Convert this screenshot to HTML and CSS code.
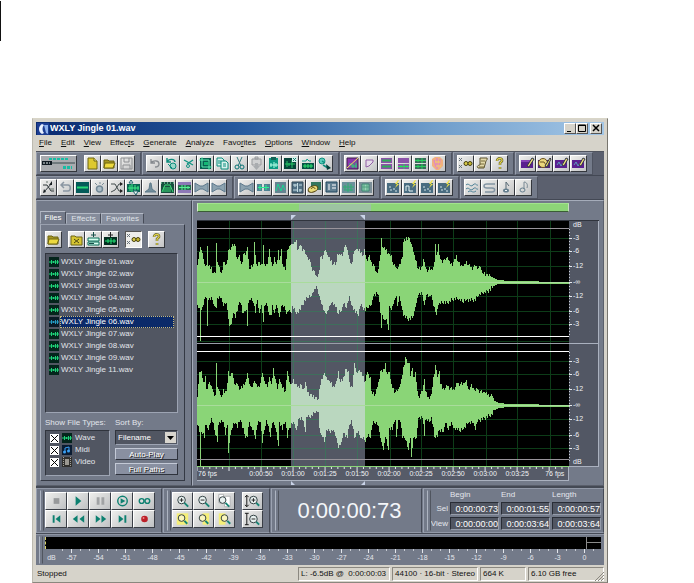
FILE: index.html
```html
<!DOCTYPE html>
<html lang="en">
<head>
<meta charset="utf-8">
<title>WXLY Jingle 01.wav</title>
<link rel="stylesheet" href="styles.css">
</head>
<body>
<svg class="defs" aria-hidden="true">
  <symbol id="new" viewBox="0 0 15 15"><path d="M3 2h6l3 3v8H3z" fill="#ddc92e" stroke="#6d6412"/><path d="M9 2v3h3" fill="#f6ee9c" stroke="#6d6412"/></symbol>
  <symbol id="open" viewBox="0 0 15 15"><path d="M2 4h4l1 1h5v7H2z" fill="#a59722" stroke="#6d6412"/><path d="M3 7h10l-2 5H2z" fill="#ecd93e" stroke="#6d6412"/></symbol>
  <symbol id="save" viewBox="0 0 15 15"><path d="M2 2h11v11H2zM5 2v4h5V2M4 13V9h7v4" fill="none" stroke="#8d8f92"/></symbol>
  <symbol id="undo" viewBox="0 0 15 15"><path d="M4 3v4h4M4 7c2-3 8-3 8 1 0 2-1 3-4 3" fill="none" stroke="#85898e" stroke-width="1.3"/></symbol>
  <symbol id="redo" viewBox="0 0 15 15"><path d="M3 2v4h4M3 6c2-4 8-3 8 0" fill="none" stroke="#0b8c7c" stroke-width="1.4"/><circle cx="9" cy="10" r="3" fill="#9ad5c8" stroke="#0b8c7c"/><path d="M4 8l4 4" stroke="#0b8c7c"/></symbol>
  <symbol id="trim" viewBox="0 0 15 15"><path d="M3 4l9 5M12 4L6 8" fill="none" stroke="#119583" stroke-width="1.4"/><circle cx="7" cy="10" r="1.500" fill="none" stroke="#119583"/></symbol>
  <symbol id="crop" viewBox="0 0 15 15"><path d="M2 2h11v11H2z" fill="#076150"/><path d="M4 1v10h10M1 4h10v10" fill="none" stroke="#5cf0b0"/><path d="M6 6h4v3H6z" fill="#14b874"/></symbol>
  <symbol id="copy" viewBox="0 0 15 15"><path d="M2 2h5l2 2v6H2z" fill="#d7f2ed" stroke="#0b8c7c"/><path d="M6 5h5l2 2v6H6z" fill="#d7f2ed" stroke="#0b8c7c"/><path d="M3 5h3M3 7h3M8 8h3M8 10h3" stroke="#0b8c7c"/></symbol>
  <symbol id="cut" viewBox="0 0 15 15"><path d="M5 1l4 9M10 1L6 10" stroke="#337d80" fill="none"/><circle cx="5" cy="11" r="2" fill="none" stroke="#0a7475"/><circle cx="10" cy="11" r="2" fill="none" stroke="#0a7475"/></symbol>
  <symbol id="paste" viewBox="0 0 15 15"><path d="M3 3h9v6H3zM6 1h3v2H6z" fill="#cfd0d1" stroke="#989a9d"/><path d="M6 7h3v3h2l-3.500 4L4 10h2z" fill="#a9acaf"/></symbol>
  <symbol id="mix" viewBox="0 0 15 15"><path d="M3 2h9v11H3z" fill="#0b9b82"/><path d="M5 1h5v3H5z" fill="#126356"/><path d="M4 9h8M5 7v4M8 6v6M10 7v4" stroke="#b3ffe8"/></symbol>
  <symbol id="wavex" viewBox="0 0 15 15"><path d="M1 2h12v11H1z" fill="#06463a"/><path d="M2 8h10M4 5v6M6 7v3M9 4v8" stroke="#29c766"/><path d="M9 1h5v5H9z" fill="#d5f2ec"/><path d="M10 2l3 3M13 2l-3 3" stroke="#16786d"/></symbol>
  <symbol id="wavein" viewBox="0 0 15 15"><path d="M2 7h12v6H2z" fill="#065345"/><path d="M3 10h10M5 8v4M8 8v4M11 8v4" stroke="#2fe36f"/><path d="M2 5h4l1-2 2 2h2" fill="none" stroke="#139c8a"/></symbol>
  <symbol id="convert" viewBox="0 0 15 15"><circle cx="5" cy="5" r="3" fill="#59cbb9" stroke="#109080"/><path d="M6 9l5 3M5 5l3 2" stroke="#0b8c7c" stroke-width="1.500"/><path d="M9 8l5 4-4 2z" fill="#063f3a"/></symbol>
  <symbol id="split" viewBox="0 0 15 15"><path d="M2 2h11v11H2z" fill="#8a35ae" stroke="#3c1c4b"/><path d="M3 12L12 3v9z" fill="#7b4ba0"/><path d="M4 8h3M6 10h6M8 8v4M11 7v5" stroke="#2bd177"/><path d="M2 12L13 2" stroke="#f4e85a"/></symbol>
  <symbol id="corner" viewBox="0 0 15 15"><path d="M4 11V4h7v2L7 10z" fill="#e5dce9" stroke="#9261a7"/></symbol>
  <symbol id="bars" viewBox="0 0 15 15"><path d="M2 2h11v5H2zM2 8h11v5H2z" fill="#8b52a9"/><path d="M3 4.500h9M3 10.500h9" stroke="#2fae58" stroke-width="2"/></symbol>
  <symbol id="bars2" viewBox="0 0 15 15"><path d="M2 2h11v5H2zM2 8h11v5H2z" fill="#8b52a9"/><path d="M2 10.500h11M5 9v3M8 8v5M11 9v3" stroke="#27e05b"/></symbol>
  <symbol id="bars3" viewBox="0 0 15 15"><path d="M2 2h11v5H2zM2 8h11v5H2z" fill="#3a6b5a"/><path d="M2 4.500h11M2 10.500h11M5 3v3M9 2v5M5 9v3M9 8v5" stroke="#27d05b"/></symbol>
  <symbol id="spectral" viewBox="0 0 15 15"><path d="M2 3l3-2h5l3 3v6l-4 4H6l-4-4z" fill="#f2b07e"/><path d="M4 4l2 7M7 2v11M10 3l-1 8" stroke="#e08abf" stroke-width="1.500"/><path d="M5 6h5M6 10h5" stroke="#f5da59"/></symbol>
  <symbol id="options" viewBox="0 0 15 15"><path d="M1 2l3 3M4 2L1 5M1 9l3 3M4 9l-3 3" stroke="#68737b"/><path d="M6 6h3v3H6z" fill="#5f5716"/><circle cx="8" cy="7.500" r="2" fill="#d8cb49" stroke="#484213"/><circle cx="12" cy="7.500" r="2" fill="#c4b52d" stroke="#484213"/></symbol>
  <symbol id="scroll" viewBox="0 0 15 15"><path d="M5 2h7c1 2-1 2-1 3l-2 7H3c-2-2 1-3 2-3z" fill="#e3d9aa" stroke="#5d5330"/><path d="M6 5h4M5 8h4M4 11h5" stroke="#776b3d"/></symbol>
  <symbol id="help" viewBox="0 0 15 15"><path d="M5 5c0-4 6-3 5 0l-2 2v2M8 11v2" fill="none" stroke="#5c5a2c" stroke-width="2.500"/><path d="M5 5c0-4 6-3 5 0l-2 2v2M8 11v2" fill="none" stroke="#e4d649" stroke-width="1.300"/></symbol>
  <symbol id="pen" viewBox="0 0 15 15"><path d="M1 4h12v8H1z" fill="#5a2090"/><path d="M1 5h9" stroke="#b56add"/><path d="M7 10l5-8 2 1-5 8z" fill="#ecd978" stroke="#303648"/></symbol>
  <symbol id="penball" viewBox="0 0 15 15"><path d="M1 4h12v8H1z" fill="#4b2676"/><circle cx="6" cy="7" r="4.500" fill="#ead77d" stroke="#6b5220"/><path d="M3 6h4l2 3" fill="none" stroke="#6b5220"/><path d="M8 10l5-8 1 1-4 8z" fill="#f2df65" stroke="#303648"/></symbol>
  <symbol id="penwave" viewBox="0 0 15 15"><path d="M1 4h12v8H1z" fill="#5a2090"/><path d="M3 9l2-3 2 4 2-3" fill="none" stroke="#5d9cbe"/><path d="M8 9l4-7 2 1-4 7z" fill="#ecd978" stroke="#303648"/></symbol>
  <symbol id="invert" viewBox="0 0 15 15"><path d="M2 5h4l4 6h3M3 12L11 3" fill="none" stroke="#30383b"/><path d="M11 1v4H8zM2 13l1-4 2 3z" fill="#161d20"/><path d="M5 2h2M9 9h4" stroke="#64736a"/></symbol>
  <symbol id="reverse" viewBox="0 0 15 15"><path d="M3 5h7c3 0 3 6 0 6H5M6 2L3 5l3 3" fill="none" stroke="#8b97a2" stroke-width="1.500"/></symbol>
  <symbol id="silence" viewBox="0 0 15 15"><path d="M1 2h13v11H1z" fill="#045b59"/><path d="M2 7.500h11" stroke="#25d876" stroke-width="2"/></symbol>
  <symbol id="ball" viewBox="0 0 15 15"><circle cx="7.500" cy="9" r="3" fill="#acbdc7" stroke="#728896" stroke-width="1.500"/><path d="M3 3l2 2M8 2v2M12 3l-2 2" stroke="#7b8e99"/></symbol>
  <symbol id="channel" viewBox="0 0 15 15"><path d="M2 4h4l4 7h3M2 12l4-2 4-6h3" fill="none" stroke="#434c4d"/><path d="M11 2l3 2-3 2zM11 9l3 2-3 2z" fill="#222"/></symbol>
  <symbol id="amplify" viewBox="0 0 15 15"><path d="M1 4h13v8H1z" fill="#0b6853"/><path d="M2 8h11M4 5v6M6 4v8M9 5v6M12 6v4" stroke="#3ff189"/><path d="M5 0l2 3H3zM10 15l-3-4h5z" fill="#effff7" stroke="#23606c"/></symbol>
  <symbol id="peak" viewBox="0 0 15 15"><path d="M2 12h11L9 9 8 3H7L6 9z" fill="#728d9b" stroke="#5d7989"/></symbol>
  <symbol id="envelope" viewBox="0 0 15 15"><path d="M1 2h13v11H1z" fill="#17503f"/><path d="M2 12L5 5h5l3 7M4 12V7M6 12V7M8 12V7M10 12V7" fill="none" stroke="#3ddc78"/><path d="M1 3h13" stroke="#9ff2c7" stroke-dasharray="1 2"/></symbol>
  <symbol id="normal" viewBox="0 0 15 15"><path d="M1 2h13v11H1z" fill="#8d78b6"/><path d="M1 5h13v5H1z" fill="#2a6b52"/><path d="M2 7.500h11M5 5v5M8 5v5M11 6v3" stroke="#57f493"/></symbol>
  <symbol id="bow" viewBox="0 0 15 15"><path d="M1 3l5 3h3l5-3v9L9 9H6l-5 3z" fill="#8da3b0" stroke="#5d798c"/></symbol>
  <symbol id="delay" viewBox="0 0 15 15"><path d="M1 4h5v7H1zM8 4h6v7H8z" fill="#4f8292"/><path d="M2 7.500h11M4 5v5M10 5v5" stroke="#2df294"/></symbol>
  <symbol id="filter" viewBox="0 0 15 15"><path d="M2 2h11v11H2z" fill="#648491"/><path d="M3 11L5 4l3 7 2-6 2 5" fill="none" stroke="#1dd392"/></symbol>
  <symbol id="grid" viewBox="0 0 15 15"><path d="M2 2h11v11H2z" fill="#506f83" stroke="#304654"/><path d="M3 5h4M9 5h3M3 10h4M9 10h3M5 4v3M10 9v3M7.500 3v9" stroke="#c4dce2"/></symbol>
  <symbol id="shell" viewBox="0 0 15 15"><path d="M4 2h10v8H4z" fill="#33775e"/><ellipse cx="6" cy="9" rx="5" ry="3" transform="rotate(-20 6 9)" fill="#e9dc79" stroke="#58450f"/><path d="M4 9c1-2 4-2 4 0" fill="none" stroke="#58450f"/></symbol>
  <symbol id="info" viewBox="0 0 15 15"><path d="M2 2h11v10H2z" fill="#607f91" stroke="#21475e"/><path d="M5 4v6M8 5h4M8 8h4" stroke="#fff"/></symbol>
  <symbol id="cross" viewBox="0 0 15 15"><path d="M1 2h13v11H1z" fill="#6b919b"/><path d="M2 7h11M7 3v9M4 5v5M10 4v7M3 10h9" stroke="#31ad73"/></symbol>
  <symbol id="target" viewBox="0 0 15 15"><path d="M1 2h13v11H1z" fill="#7b8e97"/><path d="M4 4h7v7H4z" fill="#9bd3b8" stroke="#3b8572"/><path d="M6 4v7M9 4v7M4 7h7" stroke="#51a07f"/></symbol>
  <symbol id="spark" viewBox="0 0 15 15"><path d="M1 3h12v10H1z" fill="#496c80"/><path d="M3 7h2M4 10h2M7 9h2M9 11h2" stroke="#d5e5e9"/><path d="M12 0L9 4h2l-2 4 4-4h-2l2-4z" fill="#f3e543"/></symbol>
  <symbol id="sparkn" viewBox="0 0 15 15"><path d="M1 3h12v10H1z" fill="#496c80"/><path d="M3 11V6h3v5h4" fill="none" stroke="#e5f4f4"/><path d="M12 0L9 4h2l-2 4 4-4h-2l2-4z" fill="#f3e543"/></symbol>
  <symbol id="waves" viewBox="0 0 15 15"><path d="M1 5c3-3 4 3 7 0s3 1 5 0M1 9c3-3 4 3 7 0s3 1 5 0M3 12c3-3 4 2 8-1" fill="none" stroke="#4c8197"/></symbol>
  <symbol id="loop" viewBox="0 0 15 15"><path d="M13 4H5C1 4 1 8 5 8h5c4 0 3 4 0 4H3" fill="none" stroke="#8395a3" stroke-width="1.500"/></symbol>
  <symbol id="note" viewBox="0 0 15 15"><path d="M7 2v9M7 2l3 4" fill="none" stroke="#576975"/><ellipse cx="7" cy="10.500" rx="3" ry="2" fill="#637d8d"/><path d="M6 10.500h2" stroke="#f0f5f8"/></symbol>
  <symbol id="note2" viewBox="0 0 15 15"><path d="M8 2v7M8 2c3 0 4 3 3 6" fill="none" stroke="#7a8a95"/><ellipse cx="6.500" cy="10" rx="2.500" ry="2" fill="none" stroke="#637d8d"/></symbol>
  <symbol id="closef" viewBox="0 0 15 15"><path d="M2 4h4l1 1h6v8H2z" fill="#d6c532" stroke="#6d6412"/><path d="M5 7l5 4M10 7l-5 4" stroke="#4a4612"/></symbol>
  <symbol id="insert" viewBox="0 0 15 15"><path d="M2 6h11v3H2zM2 10h11v3H2z" fill="#d8fff1" stroke="#0a6e59"/><path d="M7.500 0v5M5 3h5M3 11.500h5" stroke="#164f49"/></symbol>
  <symbol id="insertw" viewBox="0 0 15 15"><path d="M1 5h13v8H1z" fill="#032e21"/><path d="M2 9h11M5 7v4M8 6v6M11 7v4" stroke="#23e375"/><path d="M7.500 0v5M5 3h5" stroke="#222"/></symbol>
  <symbol id="wavefile" viewBox="0 0 10 10"><path d="M0 0h10v10H0z" fill="#04251c"/><path d="M0 5h10M2.500 3v4M4.500 4v2M6.500 3v4M8.500 3v4" stroke="#1fd47a"/></symbol>
  <symbol id="midifile" viewBox="0 0 10 10"><path d="M0 0h10v10H0z" fill="#091b32"/><path d="M3 7V3l4-1v4" fill="none" stroke="#3aa0f5"/><circle cx="2.500" cy="7" r="1.500" fill="#3aa0f5"/><circle cx="6.500" cy="6" r="1.500" fill="#3aa0f5"/></symbol>
  <symbol id="videofile" viewBox="0 0 10 10"><path d="M0 0h10v10H0z" fill="#302f2d"/><path d="M3 2h4v6H3z" fill="#9b9892"/><path d="M1.500 0v10M8.500 0v10" stroke="#a5a29b" stroke-dasharray="1 1"/></symbol>
  <symbol id="stop" viewBox="0 0 20 16"><path d="M7 5h6v6H7z" fill="#97999b"/></symbol>
  <symbol id="play" viewBox="0 0 20 16"><path d="M7 3l6 5-6 5z" fill="#0d8070"/></symbol>
  <symbol id="pause" viewBox="0 0 20 16"><path d="M6 4h3v8H6zM11 4h3v8h-3z" fill="#a0a2a4"/></symbol>
  <symbol id="playc" viewBox="0 0 20 16"><circle cx="10" cy="8" r="5" fill="none" stroke="#0d8070" stroke-width="1.500"/><path d="M8 5l5 3-5 3z" fill="#0d8070"/></symbol>
  <symbol id="inf" viewBox="0 0 20 16"><circle cx="7" cy="8" r="2.500" fill="none" stroke="#0d8070" stroke-width="1.500"/><circle cx="13" cy="8" r="2.500" fill="none" stroke="#0d8070" stroke-width="1.500"/></symbol>
  <symbol id="first" viewBox="0 0 20 16"><path d="M6 4h2v8H6zM14 4v8L9 8z" fill="#0d8070"/></symbol>
  <symbol id="rew" viewBox="0 0 20 16"><path d="M9 4v8L4 8zM16 4v8l-5-4z" fill="#0d8070"/></symbol>
  <symbol id="fwd" viewBox="0 0 20 16"><path d="M5 4v8l5-4zM11 4v8l5-4z" fill="#0d8070"/></symbol>
  <symbol id="last" viewBox="0 0 20 16"><path d="M12 4h2v8h-2zM6 4v8l5-4z" fill="#0d8070"/></symbol>
  <symbol id="rec" viewBox="0 0 20 16"><circle cx="10" cy="8" r="3.500" fill="#bc2029"/><circle cx="9" cy="7" r="1" fill="#f08a8a"/></symbol>
  <symbol id="zin" viewBox="0 0 20 16"><circle cx="9" cy="7" r="4" fill="#e8f1f0" stroke="#2c3b3d"/><path d="M7 7h4M9 5v4" stroke="#222"/><path d="M12 10l4 4" stroke="#168575" stroke-width="2"/></symbol>
  <symbol id="zout" viewBox="0 0 20 16"><circle cx="9" cy="7" r="4" fill="#e8f1f0" stroke="#2c3b3d"/><path d="M7 7h4" stroke="#222"/><path d="M12 10l4 4" stroke="#168575" stroke-width="2"/></symbol>
  <symbol id="zfull" viewBox="0 0 20 16"><path d="M4 1h5v9H4zM10 3h6v11h-6z" fill="#fff" stroke="#b0b2b4"/><circle cx="8" cy="7" r="3.500" fill="#e8f1f0" stroke="#2c3b3d"/><path d="M11 10l4 4" stroke="#168575" stroke-width="2"/></symbol>
  <symbol id="zsel" viewBox="0 0 20 16"><path d="M4 2h12v12H4z" fill="#f5ef78"/><circle cx="9" cy="7" r="3.500" fill="#faf6bd" stroke="#2c3b3d"/><path d="M12 10l3 3" stroke="#168575" stroke-width="2"/></symbol>
  <symbol id="zleft" viewBox="0 0 20 16"><path d="M9 2h7v12H9z" fill="#f5ef78"/><circle cx="9" cy="7" r="3.500" fill="#faf6bd" stroke="#2c3b3d"/><path d="M12 10l3 3" stroke="#168575" stroke-width="2"/></symbol>
  <symbol id="zright" viewBox="0 0 20 16"><path d="M4 2h7v12H4z" fill="#f5ef78"/><circle cx="10" cy="7" r="3.500" fill="#faf6bd" stroke="#2c3b3d"/><path d="M13 10l3 3" stroke="#168575" stroke-width="2"/></symbol>
  <symbol id="vin" viewBox="0 0 20 16"><path d="M4 2v12M2 4l2-2 2 2M2 12l2 2 2-2" fill="none" stroke="#111"/><circle cx="11" cy="7" r="4" fill="#e8f1f0" stroke="#2c3b3d"/><path d="M9 7h4M11 5v4" stroke="#222"/><path d="M14 10l3 3" stroke="#168575" stroke-width="2"/></symbol>
  <symbol id="vout" viewBox="0 0 20 16"><path d="M4 2v12M2 2h4M2 14h4" fill="none" stroke="#111"/><circle cx="11" cy="8" r="4" fill="#e8f1f0" stroke="#2c3b3d"/><path d="M9 8h4" stroke="#222"/><path d="M14 11l3 3" stroke="#168575" stroke-width="2"/></symbol>
</svg>

<div class="text-cursor"></div>
<main class="window">
  <header class="title">
    <svg class="app-icon" viewBox="0 0 12 12"><path d="M0 0h12v12H0z" fill="#1c3d92"/><path d="M5 1C1 3 1 9 5 11l2-1C5 8 5 4 7 2z" fill="#e9f1ff"/><path d="M7 2h4v9l-2-1z" fill="#8fb2ec"/></svg>
    <h1>WXLY Jingle 01.wav</h1>
    <div class="win-buttons">
      <button aria-label="Minimize"><svg viewBox="0 0 10 9"><path d="M2 7.500h4" stroke="#000"/></svg></button>
      <button aria-label="Maximize"><svg viewBox="0 0 10 9"><path d="M1.500 1v6.500h7V1z" fill="none" stroke="#000"/><path d="M1 1.500h8" stroke="#000"/></svg></button>
      <button class="close" aria-label="Close"><svg viewBox="0 0 10 9"><path d="M2 1l6 6M8 1L2 7" stroke="#000" stroke-width="1.500"/></svg></button>
    </div>
  </header>
  <nav class="menu">
    <a href="#"><u>F</u>ile</a><a href="#"><u>E</u>dit</a><a href="#"><u>V</u>iew</a><a href="#">Effec<u>t</u>s</a><a href="#"><u>G</u>enerate</a><a href="#"><u>A</u>nalyze</a><a href="#">Favo<u>r</u>ites</a><a href="#"><u>O</u>ptions</a><a href="#"><u>W</u>indow</a><a href="#"><u>H</u>elp</a>
  </nav>
  <div class="body">
    <div class="toolbar">
      <div class="group">
        <button class="tb mode" aria-label="Switch view"><svg viewBox="0 0 35 15"><path d="M8 3h20" stroke="#17bda5" stroke-width="2" stroke-dasharray="3 1"/><path d="M1 5h10v4H1z" fill="#101a22"/><path d="M11 7h23" stroke="#39484d"/><path d="M2 7h7" stroke="#e7eff0" stroke-dasharray="2 1"/><path d="M22 11.500h9" stroke="#17bda5" stroke-width="3" stroke-dasharray="3 1"/></svg></button>
        <button class="tb" aria-label="New"><svg><use href="#new"/></svg></button><button class="tb" aria-label="Open"><svg><use href="#open"/></svg></button><button class="tb" aria-label="Save"><svg><use href="#save"/></svg></button>
      </div>
      <div class="group">
        <button class="tb" aria-label="Undo"><svg><use href="#undo"/></svg></button><button class="tb" aria-label="Repeat"><svg><use href="#redo"/></svg></button><button class="tb" aria-label="Trim"><svg><use href="#trim"/></svg></button><button class="tb" aria-label="Crop"><svg><use href="#crop"/></svg></button><button class="tb" aria-label="Copy"><svg><use href="#copy"/></svg></button><button class="tb" aria-label="Cut"><svg><use href="#cut"/></svg></button><button class="tb" aria-label="Paste"><svg><use href="#paste"/></svg></button><button class="tb" aria-label="Mix paste"><svg><use href="#mix"/></svg></button><button class="tb" aria-label="Delete selection"><svg><use href="#wavex"/></svg></button><button class="tb" aria-label="Insert wave"><svg><use href="#wavein"/></svg></button><button class="tb" aria-label="Convert"><svg><use href="#convert"/></svg></button>
      </div>
      <div class="group">
        <button class="tb" aria-label="Toggle spectral"><svg><use href="#split"/></svg></button><button class="tb" aria-label="Snap"><svg><use href="#corner"/></svg></button><button class="tb" aria-label="Both channels"><svg><use href="#bars"/></svg></button><button class="tb" aria-label="Left channel"><svg><use href="#bars2"/></svg></button><button class="tb" aria-label="Right channel"><svg><use href="#bars3"/></svg></button><button class="tb" aria-label="Spectrum"><svg><use href="#spectral"/></svg></button>
      </div>
      <div class="group">
        <button class="tb" aria-label="Settings"><svg><use href="#options"/></svg></button><button class="tb" aria-label="Scripts"><svg><use href="#scroll"/></svg></button><button class="tb" aria-label="Help"><svg><use href="#help"/></svg></button>
      </div>
      <div class="group">
        <button class="tb" aria-label="Edit cue"><svg><use href="#pen"/></svg></button><button class="tb" aria-label="Edit play list"><svg><use href="#penball"/></svg></button><button class="tb" aria-label="Edit info"><svg><use href="#penwave"/></svg></button><button class="tb" aria-label="Edit format"><svg><use href="#penwave"/></svg></button>
      </div>
    </div>
    <div class="toolbar">
      <div class="group">
        <button class="tb" aria-label="Invert"><svg><use href="#invert"/></svg></button><button class="tb" aria-label="Reverse"><svg><use href="#reverse"/></svg></button><button class="tb" aria-label="Silence"><svg><use href="#silence"/></svg></button><button class="tb" aria-label="Pan"><svg><use href="#ball"/></svg></button><button class="tb" aria-label="Channel mixer"><svg><use href="#channel"/></svg></button><button class="tb" aria-label="Amplify"><svg><use href="#amplify"/></svg></button><button class="tb" aria-label="Limiter"><svg><use href="#peak"/></svg></button><button class="tb" aria-label="Envelope"><svg><use href="#envelope"/></svg></button><button class="tb" aria-label="Normalize"><svg><use href="#normal"/></svg></button><button class="tb" aria-label="Compress"><svg><use href="#bow"/></svg></button><button class="tb" aria-label="Expand"><svg><use href="#bow"/></svg></button>
      </div>
      <div class="group">
        <button class="tb" aria-label="Stretch"><svg><use href="#bow"/></svg></button><button class="tb" aria-label="Delay"><svg><use href="#delay"/></svg></button><button class="tb" aria-label="Filter"><svg><use href="#filter"/></svg></button><button class="tb" aria-label="Equalizer"><svg><use href="#grid"/></svg></button><button class="tb" aria-label="Reverb"><svg><use href="#shell"/></svg></button><button class="tb" aria-label="Multitap"><svg><use href="#info"/></svg></button><button class="tb" aria-label="Flanger"><svg><use href="#cross"/></svg></button><button class="tb" aria-label="Chamber"><svg><use href="#target"/></svg></button>
      </div>
      <div class="group">
        <button class="tb" aria-label="Click elimination"><svg><use href="#spark"/></svg></button><button class="tb" aria-label="Noise reduction"><svg><use href="#sparkn"/></svg></button><button class="tb" aria-label="Hiss reduction"><svg><use href="#spark"/></svg></button><button class="tb" aria-label="Clip restoration"><svg><use href="#spark"/></svg></button>
      </div>
      <div class="group">
        <button class="tb" aria-label="Distortion"><svg><use href="#waves"/></svg></button><button class="tb" aria-label="Loop"><svg><use href="#loop"/></svg></button><button class="tb" aria-label="Pitch"><svg><use href="#note"/></svg></button><button class="tb" aria-label="Tempo"><svg><use href="#note2"/></svg></button>
      </div>
    </div>

    <div class="work">
      <aside class="organizer">
        <div class="tabs" role="tablist"><button role="tab" aria-selected="true">Files</button><button role="tab">Effects</button><button role="tab">Favorites</button></div>
        <div class="panel">
          <div class="file-tools">
            <button class="tb" aria-label="Open file"><svg><use href="#open"/></svg></button>
            <div><button class="tb" aria-label="Close file"><svg><use href="#closef"/></svg></button><button class="tb" aria-label="Insert into multitrack"><svg><use href="#insert"/></svg></button><button class="tb" aria-label="Edit file"><svg><use href="#insertw"/></svg></button></div>
            <button class="tb pressed" aria-label="Show options"><svg><use href="#options"/></svg></button>
            <button class="tb" aria-label="Organizer help"><svg><use href="#help"/></svg></button>
          </div>
          <ul class="files">
            <li><svg><use href="#wavefile"/></svg><span>WXLY Jingle 01.wav</span></li>
            <li><svg><use href="#wavefile"/></svg><span>WXLY Jingle 02.wav</span></li>
            <li><svg><use href="#wavefile"/></svg><span>WXLY Jingle 03.wav</span></li>
            <li><svg><use href="#wavefile"/></svg><span>WXLY Jingle 04.wav</span></li>
            <li><svg><use href="#wavefile"/></svg><span>WXLY Jingle 05.wav</span></li>
            <li class="selected"><svg><use href="#wavefile"/></svg><span>WXLY Jingle 06.wav</span></li>
            <li><svg><use href="#wavefile"/></svg><span>WXLY Jingle 07.wav</span></li>
            <li><svg><use href="#wavefile"/></svg><span>WXLY Jingle 08.wav</span></li>
            <li><svg><use href="#wavefile"/></svg><span>WXLY Jingle 09.wav</span></li>
            <li><svg><use href="#wavefile"/></svg><span>WXLY Jingle 11.wav</span></li>
          </ul>
          <div class="filters">
            <div>
              <p class="caption">Show File Types:</p>
              <div class="types">
                <label><input type="checkbox" checked><svg><use href="#wavefile"/></svg>Wave</label>
                <label><input type="checkbox" checked><svg><use href="#midifile"/></svg>Midi</label>
                <label><input type="checkbox" checked><svg><use href="#videofile"/></svg>Video</label>
              </div>
            </div>
            <div class="sort">
              <label class="caption" for="sort">Sort By:</label>
              <div class="combo"><select id="sort"><option>Filename</option></select><svg viewBox="0 0 11 11"><path d="M0 0h11v11H0z" fill="#d8d5ce"/><path d="M2 4h7L5.500 8z" fill="#000"/></svg></div>
              <button class="flat">Auto-Play</button>
              <button class="flat">Full Paths</button>
            </div>
          </div>
        </div>
      </aside>
      <section class="editor">
        <div class="overview"><div class="overview-sel"></div></div>
        <svg class="handles top" viewBox="0 0 372 5" preserveAspectRatio="none"><path d="M94 0h5l-5 5zM168 0h-5l5 5z"/></svg>
        <div class="wave-row">
          <svg id="wave" viewBox="0 0 372 246" preserveAspectRatio="none"></svg>
          <svg id="db" class="db"></svg>
        </div>
        <svg id="time" class="time"></svg>
        <svg class="handles" viewBox="0 0 372 5" preserveAspectRatio="none"><path d="M94 0v4h4zM168 0v4h-4z"/></svg>
      </section>
    </div>

    <div class="lower">
      <div class="box transport">
        <button aria-label="Stop"><svg><use href="#stop"/></svg></button><button aria-label="Play"><svg><use href="#play"/></svg></button><button aria-label="Pause"><svg><use href="#pause"/></svg></button><button aria-label="Play to end"><svg><use href="#playc"/></svg></button><button aria-label="Play looped"><svg><use href="#inf"/></svg></button>
        <button aria-label="Go to start"><svg><use href="#first"/></svg></button><button aria-label="Rewind"><svg><use href="#rew"/></svg></button><button aria-label="Fast forward"><svg><use href="#fwd"/></svg></button><button aria-label="Go to end"><svg><use href="#last"/></svg></button><button aria-label="Record"><svg><use href="#rec"/></svg></button>
      </div>
      <div class="box zooms">
        <button aria-label="Zoom in"><svg><use href="#zin"/></svg></button><button aria-label="Zoom out"><svg><use href="#zout"/></svg></button><button aria-label="Zoom full"><svg><use href="#zfull"/></svg></button><i></i><button aria-label="Vertical zoom in"><svg><use href="#vin"/></svg></button>
        <button aria-label="Zoom to selection"><svg><use href="#zsel"/></svg></button><button aria-label="Zoom left edge"><svg><use href="#zleft"/></svg></button><button aria-label="Zoom right edge"><svg><use href="#zright"/></svg></button><i></i><button aria-label="Vertical zoom out"><svg><use href="#vout"/></svg></button>
      </div>
      <div class="box clock"><output>0:00:00:73</output></div>
      <div class="box range">
        <span></span><span>Begin</span><span>End</span><span>Length</span>
        <span class="row-name">Sel</span><input aria-label="Selection begin" value="0:00:00:73"><input aria-label="Selection end" value="0:00:01:55"><input aria-label="Selection length" value="0:00:00:57">
        <span class="row-name">View</span><input aria-label="View begin" value="0:00:00:00"><input aria-label="View end" value="0:00:03:64"><input aria-label="View length" value="0:00:03:64">
      </div>
    </div>

    <div class="meter">
      <div class="level"><div class="clip"></div></div>
      <div class="scale">
        <span class="unit">dB</span><span>-57</span><span>-54</span><span>-51</span><span>-48</span><span>-45</span><span>-42</span><span>-39</span><span>-36</span><span>-33</span><span>-30</span><span>-27</span><span>-24</span><span>-21</span><span>-18</span><span>-15</span><span>-12</span><span>-9</span><span>-6</span><span>-3</span><span>0</span>
      </div>
    </div>
  </div>
  <footer class="status">
    <span class="state">Stopped</span><span class="cell pos">L: -6.5dB @&nbsp; 0:00:00:03</span><span class="cell fmt">44100 · 16-bit · Stereo</span><span class="cell size">664 K</span><span class="cell free">6.10 GB free</span>
    <svg class="grip" viewBox="0 0 9 9"><path d="M0 9L9 0M3 9l6-6M6 9l3-3" stroke="#8b8880"/></svg>
  </footer>
</main>
<script src="wave.js"></script>
</body>
</html>
```
FILE: styles.css
```css
* { box-sizing: border-box; }
body {
  margin: 0;
  background: #fff;
  color: #111;
  font: 8px/12px "Liberation Sans", Arial, sans-serif;
}
.defs { position: absolute; width: 0; height: 0; }
button, input, select { font: inherit; color: inherit; margin: 0; padding: 0; border-radius: 0; }
h1, p, ul { margin: 0; padding: 0; }
svg { display: block; }

.text-cursor { width: 1px; height: 40px; margin: 1px 0 77px; background: #111; }
.window {
  margin: 0 86px 0 32px;
  padding: 3px 3px 0;
  background: #d6d3ca;
  border: 1px solid #bdbab0;
  border-top-color: #d9d6c8;
  border-right-color: #77756e;
  border-bottom-color: #8a877e;
}
.title {
  display: flex;
  align-items: center;
  height: 13px;
  padding: 0 2px 0 1px;
  background: linear-gradient(90deg, #0a2a70, #24589d 35%, #6f9dcb 70%, #a3c6e6);
  color: #fff;
}
.app-icon { width: 12px; height: 12px; }
.title h1 { flex: 1; margin-left: 1px; font-size: 9px; line-height: 13px; }
.win-buttons { display: flex; }
.win-buttons button { width: 12px; height: 11px; background: #d6d3ca; border: 1px solid; border-color: #fff #555 #555 #fff; }
.win-buttons .close { margin-left: 2px; }
.win-buttons svg { width: 10px; height: 9px; }
.menu { display: flex; gap: 9px; height: 16px; padding-left: 3px; line-height: 15px; }
.menu a { color: #111; text-decoration: none; }

.body { background: #737a89; border-top: 1px solid #50545e; }
.toolbar { display: flex; gap: 1px; height: 24px; background: #5b606e; border-bottom: 1px solid #434854; }
.group {
  display: flex;
  align-items: center;
  height: 23px;
  padding: 0 5px 0 3px;
  background: #747b8a;
  border: 1px solid;
  border-color: #8d94a3 #4e5360 #4e5360 #99a0af;
}
.tb {
  display: grid;
  place-items: center;
  width: 17px;
  height: 17px;
  background: linear-gradient(135deg, #f0f0ee, #c3c4c5);
  border: 1px solid;
  border-color: #fff #34373d #34373d #fff;
}
.tb svg { width: 15px; height: 15px; }
.tb.mode { width: 37px; margin-right: 7px; background: #a8abaf; }
.tb.mode svg { width: 35px; }
.tb.pressed { background: #eeeeec; border-color: #555 #fff #fff #555; }

.work { display: flex; height: 288px; border-bottom: 2px solid #444954; }
.organizer {
  width: 156px;
  padding: 10px 6px 5px 3px;
  border: 1px solid;
  border-color: #9ba2b0 #3e434e #5a606c #8b92a0;
  color: #e2e5eb;
}
.tabs { display: flex; align-items: flex-end; height: 13px; }
.tabs button {
  height: 11px;
  width: 35px;
  background: #858c9b;
  border: 1px solid;
  border-color: #b4bac6 #474c58 transparent #a8afbc;
  line-height: 9px;
  color: #dfe2e8;
}
.tabs button:first-child { width: 26px; height: 13px; background: #737a89; color: #fff; }
.tabs button:last-child { width: 43px; }
.panel {
  height: 257px;
  padding: 6px 6px 5px 4px;
  border: 1px solid;
  border-color: #99a0ae #343944 #343944 #a7aebb;
}
.file-tools { display: flex; gap: 6px; height: 22px; }
.file-tools div { display: flex; }
.files {
  height: 160px;
  padding: 2px 3px 3px;
  list-style: none;
  background: #515662;
  border: 1px solid;
  border-color: #30343d #9da4b3 #9da4b3 #30343d;
}
.files li { display: flex; align-items: center; height: 12px; gap: 1px; }
.files svg, .types svg { width: 10px; height: 10px; }
.files span { flex: 1; height: 12px; padding-left: 1px; line-height: 12px; }
.files .selected span { background: #0b2a69; outline: 1px dotted #c8b878; outline-offset: -1px; color: #fff; }
.files .selected svg { filter: hue-rotate(50deg) brightness(.8); }
.filters { display: flex; gap: 5px; padding-top: 4px; }
.caption { display: block; height: 13px; line-height: 12px; }
.types {
  width: 65px;
  height: 46px;
  padding: 1px 4px;
  background: #515662;
  border: 1px solid;
  border-color: #30343d #9da4b3 #9da4b3 #30343d;
}
.types label { display: flex; align-items: center; gap: 3px; height: 12px; }
.types input {
  appearance: none;
  width: 9px;
  height: 9px;
  border: 1px solid #fff;
  background:
    linear-gradient(45deg, transparent 43%, #000 43% 57%, transparent 57%),
    linear-gradient(135deg, transparent 43%, #000 43% 57%, transparent 57%),
    #fff;
}
.sort { width: 63px; }
.combo {
  display: flex;
  align-items: center;
  height: 15px;
  background: #515662;
  border: 1px solid;
  border-color: #30343d #9da4b3 #9da4b3 #30343d;
}
.combo select { flex: 1; min-width: 0; padding-left: 2px; appearance: none; background: none; border: 0; color: #fff; }
.combo svg { width: 11px; height: 11px; margin-right: 1px; }
.flat {
  display: block;
  width: 100%;
  height: 12px;
  margin-top: 3px;
  background: #8990a1;
  border: 1px solid;
  border-color: #c3c9d6 #2f333d #2f333d #c3c9d6;
  line-height: 9px;
  color: #fff;
  text-shadow: 1px 1px #222;
}

.editor {
  flex: 1;
  min-width: 0;
  padding: 2px 4px 0 4px;
  border: 1px solid;
  border-color: #a5acba #5a5f6b #5a5f6b #a5acba;
}
.overview { height: 9px; margin-right: 30px; padding-left: 25%; background: #8dd578; border: 1px solid; border-color: #a2e48e #c5dcc0 #3a5d35 #d2e8cc; }
.overview-sel { width: 27%; height: 7px; background: #9cc3a2; }
.handles { width: calc(100% - 30px); height: 5px; fill: #c9d3e8; }
.handles.top { margin-top: 3px; }
.wave-row { display: flex; border-top: 1px solid #30343d; }
#wave { flex: 1; min-width: 0; height: 246px; background: #000; }
.db { width: 30px; height: 246px; background: #525764; border-right: 1px solid #aab1bf; border-bottom: 1px solid #aab1bf; }
.time { width: calc(100% - 30px); height: 14px; background: #565b68; border-bottom: 1px solid #aab1bf; border-right: 1px solid #aab1bf; }
.db text, .time text { font-size: 7px; fill: #f0f2f5; }

.lower { display: flex; gap: 1px; height: 46px; border-bottom: 1px solid #464b57; }
.box {
  position: relative;
  height: 45px;
  padding: 3px 6px 0 8px;
  border: 1px solid;
  border-color: #9299a8 #454a56 #9299a8 #9ba2b1;
}
.box::before, .meter::before { content: ""; position: absolute; left: 3px; top: 1px; bottom: 1px; width: 2px; border: 1px solid; border-color: transparent #50555f transparent #adb4c1; }
.transport, .zooms { display: grid; grid-template-rows: 18px 18px; align-content: start; }
.transport { grid-template-columns: repeat(5, 22px); }
.zooms { grid-template-columns: 21px 21px 21px 7px 21px; }
.transport button, .zooms button {
  display: grid;
  place-items: center;
  background: linear-gradient(135deg, #eeeeec, #bfc1c3);
  border: 1px solid;
  border-color: #fff #3a3e46 #3a3e46 #fff;
}
.box button svg { width: 19px; height: 16px; }
.clock { flex: 1; display: grid; place-items: center; padding: 0 0 0 6px; }
.clock output { font-size: 22px; line-height: 26px; color: #f4f6f9; }
.range {
  display: grid;
  grid-template-columns: 18px 49px 49px 49px;
  grid-template-rows: 10px 13px 13px;
  gap: 2px;
  padding: 1px 2px 0 6px;
  color: #e3e6ec;
}
.range span { line-height: 10px; }
.range .row-name { line-height: 13px; text-align: right; }
.range input {
  width: 100%;
  height: 13px;
  background: #515662;
  border: 1px solid;
  border-color: #292d36 #959caa #959caa #292d36;
  color: #fff;
  font-size: 9px;
  text-align: right;
}

.meter { position: relative; height: 31px; padding: 2px 3px 0 9px; border-top: 1px solid #8e95a4; }
.level { display: flex; justify-content: flex-end; height: 12px; background: #000; border-left: 1px dashed #d8d36a; }
.clip { width: 15px; height: 12px; border-left: 1px solid #8b8b8b; background: linear-gradient(#8b8b8b, #8b8b8b) 0 5px / 100% 1px no-repeat; }
.scale { display: flex; padding-right: 3px; color: #e3e6ec; font-size: 7px; line-height: 10px; }
.scale span {
  flex: 1;
  padding-top: 4px;
  text-align: center;
  background:
    linear-gradient(#e3e6ec, #e3e6ec) 50% 0 / 1px 4px no-repeat,
    linear-gradient(#c5c9d1, #c5c9d1) 16% 0 / 1px 2px no-repeat,
    linear-gradient(#c5c9d1, #c5c9d1) 84% 0 / 1px 2px no-repeat;
}
.scale .unit { flex: 0 0 13px; background: none; }

.status { display: flex; align-items: center; gap: 2px; height: 16px; margin-top: 1px; position: relative; }
.state { flex: 1; padding-left: 1px; }
.cell { height: 14px; padding-left: 2px; border: 1px solid; border-color: #8b8880 #fff #fff #8b8880; line-height: 12px; white-space: nowrap; }
.pos { width: 92px; }
.fmt { width: 86px; }
.size { width: 46px; }
.free { width: 76px; }
.grip { position: absolute; right: 0; bottom: 1px; width: 9px; height: 9px; }
```
FILE: wave.js
```js
// Peak envelopes: "column height" pairs, measured from each channel's centre line.
const peaks = [
  {
    mid: 61,
    up: "0 17,2 30,3 35,5 29,7 18,9 17,10 36,11 16,14 15,16 9,18 9,19 39,20 20,22 15,24 9,26 20,29 18,31 32,33 32,35 38,38 36,39 25,42 27,44 18,46 28,48 27,50 35,51 23,52 13,54 17,56 18,57 40,58 27,59 18,61 20,63 17,65 18,66 37,67 18,70 18,72 33,74 20,76 18,77 25,79 18,81 32,82 22,84 33,85 18,88 12,89 23,90 32,93 37,95 38,98 40,99 42,100 32,103 37,106 33,108 28,110 25,113 20,114 15,116 12,118 7,120 5,122 12,123 25,126 27,128 32,130 27,132 25,136 18,139 20,140 28,143 27,146 30,148 37,150 32,152 23,154 18,156 28,158 32,160 33,164 30,166 27,167 33,168 27,169 23,172 27,174 20,176 18,179 10,181 13,183 27,184 44,185 35,189 33,192 28,194 27,195 20,198 15,200 13,202 18,205 25,206 40,209 45,211 45,213 40,215 35,217 27,219 21,221 13,224 15,226 23,228 15,230 10,232 15,235 12,237 20,238 38,239 27,241 38,242 27,244 22,247 23,250 25,253 18,256 20,259 27,261 20,265 16,267 18,269 21,273 15,278 16,283 15,285 9,290 8,293 6,296 4,301 2,311 1,372 0",
    down: "0 22,2 25,3 58,4 27,6 22,8 14,9 15,10 43,11 17,15 17,17 23,19 25,20 15,23 15,26 23,29 20,30 27,32 43,34 41,36 30,38 35,40 28,41 22,43 20,45 30,47 28,49 27,50 43,51 20,53 17,56 20,58 30,60 17,62 30,64 22,66 39,67 23,69 20,72 32,74 32,75 22,77 30,79 22,81 30,82 34,84 23,87 23,89 31,91 28,94 30,95 23,99 31,103 27,105 22,108 18,111 15,114 13,117 6,120 6,122 13,124 21,127 28,129 31,131 27,134 20,137 21,140 30,144 28,146 21,149 25,152 13,154 22,158 30,161 33,163 23,168 28,171 25,174 22,176 13,181 12,183 30,184 45,185 32,187 37,189 36,191 47,192 23,194 27,197 17,199 13,200 23,202 13,204 23,206 33,211 38,215 35,217 28,219 20,221 12,225 12,227 22,229 12,232 13,234 12,236 23,239 32,241 22,245 20,251 21,255 17,258 17,261 17,265 19,269 17,273 18,278 18,281 13,286 11,293 8,296 3,301 1,372 1"
  },
  {
    mid: 184,
    up: "0 8,2 33,4 34,6 23,8 29,9 16,12 23,15 16,17 9,18 10,19 42,20 18,22 14,24 8,26 16,29 14,31 34,33 29,35 32,37 21,40 21,43 16,46 21,49 26,50 32,52 21,54 18,57 24,59 21,62 18,65 32,67 24,70 18,72 28,74 21,76 37,78 26,80 16,82 26,84 21,88 14,90 34,92 23,94 21,96 26,100 18,103 21,106 16,108 23,110 13,114 11,118 8,121 6,122 16,124 26,127 32,129 28,132 24,136 19,139 24,141 34,143 23,146 28,148 36,151 34,153 18,155 18,157 42,159 33,162 35,164 33,168 24,170 33,173 28,174 14,178 11,180 18,183 34,185 33,188 42,189 33,192 33,194 21,198 13,200 14,202 18,204 26,206 38,208 48,210 42,212 42,213 29,215 37,216 28,218 33,219 23,221 9,225 14,227 26,228 14,231 8,234 11,236 28,238 40,240 28,242 34,243 21,246 17,250 19,256 16,260 22,267 22,269 25,271 16,274 21,277 15,280 16,283 14,287 13,291 11,295 9,297 4,301 2,311 1,372 0",
    down: "0 19,2 26,3 61,4 26,7 32,8 19,11 24,14 12,17 24,20 36,21 19,24 14,27 21,28 29,30 19,31 47,33 29,35 22,38 17,40 22,43 14,45 22,48 32,50 31,52 16,54 21,58 33,60 19,63 16,65 37,67 24,69 14,73 31,75 17,78 22,81 40,82 16,85 24,88 16,90 32,92 22,96 16,99 24,102 12,105 14,108 26,109 11,113 12,118 7,121 6,122 22,124 29,127 36,129 24,133 27,136 24,139 32,141 42,144 36,146 27,150 32,152 19,154 14,157 32,160 27,164 32,168 36,170 31,173 32,175 19,179 16,182 26,184 36,186 44,188 31,191 44,192 22,195 24,198 14,199 31,201 14,203 16,205 32,208 34,211 44,213 32,214 51,216 32,219 32,221 12,225 12,227 30,228 14,232 16,234 11,237 31,240 31,242 24,246 26,248 17,251 24,254 16,256 22,262 25,266 23,271 17,276 17,278 24,280 16,285 14,290 12,295 9,297 4,301 2,311 1,372 1"
  }
];

// One height per pixel column, with a small ripple so long slopes stay jagged.
function columns(text, seed) {
  const pts = text.split(",").map(p => p.split(" ").map(Number));
  const out = [];
  let k = 0;
  for (let x = 0; x < 372; x++) {
    while (k < pts.length - 2 && pts[k + 1][0] <= x) k++;
    const [x0, h0] = pts[k], [x1, h1] = pts[k + 1];
    const h = h0 + (h1 - h0) * (x - x0) / (x1 - x0);
    const ripple = x === x0 || h < 5 ? 0 : ((x * 7 + seed) % 5 - 3);
    out.push(Math.max(0, Math.round(h + ripple)));
  }
  return out;
}

const shape = peaks.map((ch, i) => {
  const up = columns(ch.up, i), down = columns(ch.down, i + 2);
  return up.map((h, x) => `M${x} ${ch.mid - h}h1v${h + down[x] + 1}h-1z`).join("");
}).join("");

const gridX = [32, 64, 96, 128, 160, 193, 224, 256, 289, 320, 353].map(x => `M${x}.5 0v246`).join("");
const gridY = [17, 30, 45, 75, 90, 103, 120, 140, 153, 168, 198, 214, 227].map(y => `M0 ${y}.5h372`).join("");

document.getElementById("wave").innerHTML = `
  <defs><clipPath id="sel"><path d="M94 0h74v246H94z"/></clipPath></defs>
  <g shape-rendering="crispEdges" fill="none">
    <path d="M94 0h74v246H94z" fill="#535764"/>
    <path d="${gridX}${gridY}" stroke="#0d3c18"/>
    <path d="${gridX}${gridY}" stroke="#3f6f5c" clip-path="url(#sel)"/>
    <path d="${shape}" fill="#8ad577"/>
    <path d="${shape}" fill="#bad7bf" clip-path="url(#sel)"/>
    <path d="M0 61.500h372M0 184.500h372" stroke="#a9dc9c"/>
    <path d="M0 7.500h372M0 238.500h372" stroke="#99949b"/>
    <path d="M0 115.500h372M0 130.500h372" stroke="#fff"/>
    <path d="M0 122.500h372" stroke="#999ea8"/>
    <path d="M0 245.500h372" stroke="#8ad577"/>
  </g>`;

const dbMarks = [[4, "dB"], [17, "-3"], [30, "-6"], [45, "-12"], [61, "-∞"], [75, "-12"], [90, "-6"], [103, "-3"],
  [140, "-3"], [153, "-6"], [168, "-12"], [184, "-∞"], [198, "-12"], [214, "-6"], [227, "-3"], [241, "dB"]];
let db = '<path d="M0 122.500h30" stroke="#aab1bf"/>';
for (let y = 8; y < 240; y += 3) if (Math.abs(y - 122) > 6) db += `<path d="M0 ${y}.5h1" stroke="#c9cdd5"/>`;
for (const [y, t] of dbMarks) {
  if (t !== "dB") db += `<path d="M0 ${y}.5h3" stroke="#e8eaee"/>`;
  db += `<text x="4" y="${y + 2}">${t}</text>`;
}
document.getElementById("db").innerHTML = db;

const times = { 2: "0:00:50", 3: "0:01:00", 4: "0:01:25", 5: "0:01:50", 6: "0:02:00", 7: "0:02:25", 8: "0:02:50", 9: "0:03:00", 10: "0:03:25" };
let time = "";
for (let i = 0; i < 58; i++) {
  const x = (i * 32.100 / 5 / 3.720).toFixed(2);
  time += `<line x1="${x}%" x2="${x}%" y1="0" y2="${i % 5 ? 2 : 4}" stroke="#e3e6ec"/>`;
}
for (const [i, t] of Object.entries(times)) time += `<text x="${(i * 32.100 / 3.720).toFixed(2)}%" y="9" text-anchor="middle">${t}</text>`;
time += '<text x="1" y="9">76 fps</text><text x="99%" y="9" text-anchor="end">76 fps</text>';
document.getElementById("time").innerHTML = time;
```
